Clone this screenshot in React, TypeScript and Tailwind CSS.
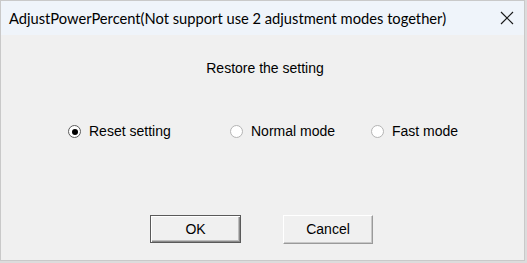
import React from 'react';

const modes = [
  { label: 'Reset setting', checked: true, w: 'w-[162px]' },
  { label: 'Normal mode', checked: false, w: 'w-[141px]' },
  { label: 'Fast mode', checked: false, w: 'w-auto' },
];

function Radio({ checked }: { checked: boolean }) {
  return (
    <span
      className={
        checked
          ? 'w-[13px] h-[13px] rounded-full border border-[#5c5c5c] bg-white flex items-center justify-center shrink-0'
          : 'w-[13px] h-[13px] rounded-full border border-[#b4b4b4] bg-white shrink-0'
      }
    >
      {checked && <span className="w-[6px] h-[6px] rounded-full bg-black" />}
    </span>
  );
}

export default function App() {
  return (
    <div className="w-[527px] h-[263px] bg-[#dcdcdc] pr-[2px] pb-[2px]">
      <div className="w-full h-full border border-[#c9c9c9] bg-[#f0f0f0] flex flex-col">
        {/* title bar */}
        <div className="h-[34px] bg-[#eff4fa] flex items-center justify-between pl-[8px] pr-[9px] font-['Lato',sans-serif] text-[14.7px] text-black">
          <span>AdjustPowerPercent(Not support use 2 adjustment modes together)</span>
          <svg width="14" height="14" viewBox="0 0 14 14" className="mr-[1px]">
            <path d="M1 1L13 13M13 1L1 13" stroke="#1a1a1a" strokeWidth="1.2" />
          </svg>
        </div>

        <div className="flex-1 flex flex-col font-['Liberation_Sans',Arial,sans-serif] text-[14px] text-black">
          <div className="mt-[23px] text-center pl-[5px]">Restore the setting</div>

          <div className="mt-[42px] flex items-center pl-[67px]">
            {modes.map((m) => (
              <div key={m.label} className={`flex items-center gap-[8px] ${m.w}`}>
                <Radio checked={m.checked} />
                <span>{m.label}</span>
              </div>
            ))}
          </div>

          <div className="mt-[73px] flex pl-[149px] gap-[42px]">
            <button className="w-[91px] h-[28px] border border-[#5a5a5a] bg-[#f0f0f0] shadow-[inset_1px_1px_0_#ffffff,inset_-1px_-1px_0_#8a8a8a,inset_-2px_-2px_0_#bdbdbd]">
              OK
            </button>
            <button className="w-[90px] h-[29px] border border-t-white border-l-white border-r-[#9a9a9a] border-b-[#9a9a9a] bg-[#f0f0f0] shadow-[inset_-1px_-1px_0_#c8c8c8]">
              Cancel
            </button>
          </div>
        </div>
      </div>
    </div>
  );
}
